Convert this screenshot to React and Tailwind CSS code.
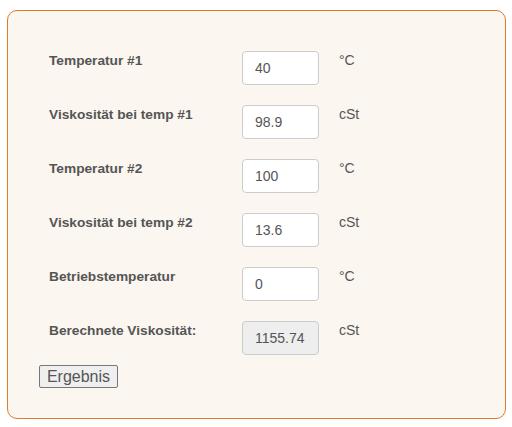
const rows = [
  { label: "Temperatur #1", value: "40", unit: "°C" },
  { label: "Viskosität bei temp #1", value: "98.9", unit: "cSt" },
  { label: "Temperatur #2", value: "100", unit: "°C" },
  { label: "Viskosität bei temp #2", value: "13.6", unit: "cSt" },
  { label: "Betriebstemperatur", value: "0", unit: "°C" },
];

export default function App() {
  return (
    <div
      className="min-h-screen bg-white pt-[10px] pl-[7px]"
      style={{ fontFamily: '"Liberation Sans", Arial, sans-serif' }}
    >
      <div className="w-[499px] h-[409px] rounded-[10px] border border-[#dd7a2d] bg-[#fbf6f0] pt-[40px] pl-[30px]">
        <div className="flex flex-col gap-[20px] pl-[11px]">
          {rows.map((r) => (
            <div key={r.label} className="flex items-start">
              <div className="w-[193px] pt-[2px] text-[13.7px] leading-[16px] font-bold text-[#555]">
                {r.label}
              </div>
              <input
                defaultValue={r.value}
                className="w-[77px] h-[34px] rounded-[4px] border border-[#ccc] bg-white px-3 text-[14px] text-[#555] outline-none"
              />
              <div className="pl-[20px] pt-[1px] text-[14px] leading-[16px] text-[#555]">
                {r.unit}
              </div>
            </div>
          ))}
          <div className="flex items-start">
            <div className="w-[193px] pt-[2px] text-[13.7px] leading-[16px] font-bold text-[#555]">
              Berechnete Viskosität:
            </div>
            <input
              readOnly
              value="1155.74"
              className="w-[77px] h-[34px] rounded-[4px] border border-[#ccc] bg-[#eee] px-3 text-[14px] text-[#555] outline-none"
            />
            <div className="pl-[20px] pt-[1px] text-[14px] leading-[16px] text-[#555]">
              cSt
            </div>
          </div>
        </div>
        <button className="mt-[10px] ml-[1px] h-[23px] w-[79px] rounded-[2px] border border-[#777] bg-[#efefef] text-[16px] leading-[20px] text-[#555]">
          Ergebnis
        </button>
      </div>
    </div>
  );
}
